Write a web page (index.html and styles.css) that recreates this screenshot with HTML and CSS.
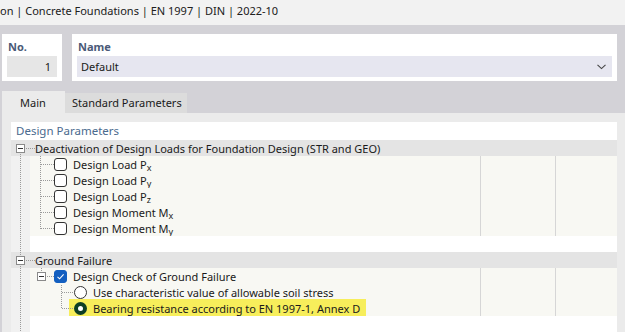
FILE: index.html
```html
<!DOCTYPE html>
<html>
<head>
<meta charset="utf-8">
<link rel="stylesheet" href="styles.css">
</head>
<body>
<div class="title">on | Concrete Foundations | EN 1997 | DIN | 2022-10</div>
<div class="header">
  <div class="card card-no">
    <div class="label">No.</div>
    <div class="field field-no">1</div>
  </div>
  <div class="card card-name">
    <div class="label">Name</div>
    <div class="field field-name">
      <span>Default</span>
      <svg class="chev" width="9" height="6" viewBox="0 0 9 6"><polyline points="0.5,0.8 4.5,4.6 8.5,0.8" fill="none" stroke="#444" stroke-width="1.1"/></svg>
    </div>
  </div>
</div>
<div class="tabs">
  <div class="tab active">Main</div>
  <div class="tab">Standard Parameters</div>
</div>
<div class="panel">
  <div class="tree">
    <div class="tree-head">Design Parameters</div>
    <div class="tree-body">
      <div class="row group"><span class="gtext">Deactivation of Design Loads for Foundation Design (STR and GEO)</span></div>
      <div class="row item">
        <div class="gutter"></div>
        <div class="cell name l2"><span class="cb"></span><span>Design Load P<sub>x</sub></span></div>
        <div class="cell c2"></div><div class="cell c3"></div>
      </div>
      <div class="row item">
        <div class="gutter"></div>
        <div class="cell name l2"><span class="cb"></span><span>Design Load P<sub>y</sub></span></div>
        <div class="cell c2"></div><div class="cell c3"></div>
      </div>
      <div class="row item">
        <div class="gutter"></div>
        <div class="cell name l2"><span class="cb"></span><span>Design Load P<sub>z</sub></span></div>
        <div class="cell c2"></div><div class="cell c3"></div>
      </div>
      <div class="row item">
        <div class="gutter"></div>
        <div class="cell name l2"><span class="cb"></span><span>Design Moment M<sub>x</sub></span></div>
        <div class="cell c2"></div><div class="cell c3"></div>
      </div>
      <div class="row item">
        <div class="gutter"></div>
        <div class="cell name l2"><span class="cb"></span><span>Design Moment M<sub>y</sub></span></div>
        <div class="cell c2"></div><div class="cell c3"></div>
      </div>
      <div class="row blank"><div class="gutter"></div><div class="cell"></div></div>
      <div class="row group"><span class="gtext">Ground Failure</span></div>
      <div class="row item">
        <div class="gutter"></div>
        <div class="cell name l2"><span class="cb checked"><svg width="13" height="13" viewBox="0 0 13 13"><polyline points="3.5,6.8 5.6,8.8 9.6,4.4" fill="none" stroke="#fff" stroke-width="1.1"/></svg></span><span>Design Check of Ground Failure</span></div>
        <div class="cell c2"></div><div class="cell c3"></div>
      </div>
      <div class="row item">
        <div class="gutter"></div>
        <div class="cell name l3"><span class="rb"></span><span>Use characteristic value of allowable soil stress</span></div>
        <div class="cell c2"></div><div class="cell c3"></div>
      </div>
      <div class="row item">
        <div class="gutter"></div>
        <div class="cell name l3"><span class="hl"><span class="rb on"></span><span>Bearing resistance according to EN 1997-1, Annex D</span></span></div>
        <div class="cell c2"></div><div class="cell c3"></div>
      </div>
      <div class="row blank tall"><div class="gutter"></div><div class="cell"></div></div>
      <svg class="lines" width="606" height="192" viewBox="0 0 606 192">
        <g fill="none" stroke="#9a9a9a" stroke-width="1" stroke-dasharray="1 1" shape-rendering="crispEdges">
          <line x1="15" y1="8.5" x2="24" y2="8.5"/>
          <line x1="9.5" y1="14" x2="9.5" y2="116"/>
          <line x1="9.5" y1="126" x2="9.5" y2="192"/>
          <line x1="15" y1="120.5" x2="24" y2="120.5"/>
          <line x1="29.5" y1="16" x2="29.5" y2="89"/>
          <line x1="30" y1="24.5" x2="43" y2="24.5"/>
          <line x1="30" y1="40.5" x2="43" y2="40.5"/>
          <line x1="30" y1="56.5" x2="43" y2="56.5"/>
          <line x1="30" y1="72.5" x2="43" y2="72.5"/>
          <line x1="30" y1="88.5" x2="43" y2="88.5"/>
          <line x1="30.5" y1="128" x2="30.5" y2="132"/>
          <line x1="36" y1="136.5" x2="43" y2="136.5"/>
          <line x1="50.5" y1="145" x2="50.5" y2="169"/>
          <line x1="51" y1="152.5" x2="63" y2="152.5"/>
          <line x1="51" y1="168.5" x2="63" y2="168.5"/>
        </g>
        <g shape-rendering="crispEdges">
          <rect x="5.5" y="4.5" width="8" height="8" fill="#fff" stroke="#8a8a8a"/>
          <line x1="7" y1="8.5" x2="12" y2="8.5" stroke="#333"/>
          <rect x="5.5" y="116.5" width="8" height="8" fill="#fff" stroke="#8a8a8a"/>
          <line x1="7" y1="120.5" x2="12" y2="120.5" stroke="#333"/>
          <rect x="26.5" y="132.5" width="8" height="8" fill="#fff" stroke="#8a8a8a"/>
          <line x1="28" y1="136.5" x2="33" y2="136.5" stroke="#333"/>
        </g>
      </svg>
    </div>
  </div>
</div>
</body>
</html>
```
FILE: styles.css
```css
* { box-sizing: border-box; }
html, body { margin: 0; padding: 0; }
body {
  width: 625px;
  height: 332px;
  overflow: hidden;
  background: #d3d2d7;
  font-family: "Noto Sans", "Open Sans", sans-serif;
  font-size: 11px;
  color: #1a1a1a;
}
.title {
  height: 25px;
  background: #f2f2f2;
  font-size: 11px;
  line-height: 21px;
  white-space: nowrap;
  color: #202020;
}
.header {
  display: flex;
  gap: 10px;
  padding: 9px 8px 0 2px;
  height: 66px;
}
.card {
  background: #fff;
  height: 47px;
  padding: 3px 5px 4px;
}
.card-no { width: 60px; }
.card-name { flex: 1; }
.label {
  height: 19px;
  line-height: 19px;
  padding-left: 1px;
  font-weight: bold;
  color: #4b5a78;
}
.field {
  height: 21px;
  line-height: 21px;
}
.field-no {
  background: #e6e6e6;
  text-align: right;
  padding-right: 6px;
}
.field-name {
  background: #e6e6f0;
  padding: 0 6px 0 4px;
  display: flex;
  align-items: center;
  justify-content: space-between;
}
.tabs {
  display: flex;
  align-items: flex-end;
  height: 22px;
  padding-left: 2px;
}
.tab {
  height: 20px;
  line-height: 20px;
  background: #dcdcdc;
  padding: 0 0 0 7px;
  width: 122px;
  white-space: nowrap;
  flex: none;
}
.tab.active {
  height: 22px;
  line-height: 24px;
  background: #ebebeb;
  width: 63px;
  padding: 0 0 0 18px;
}
.panel {
  margin-left: 2px;
  background: #ebebeb;
  height: 219px;
  padding: 9px 8px 0 9px;
}
.tree {
  background: #fff;
  height: 210px;
}
.tree-head {
  height: 18px;
  line-height: 18px;
  padding-left: 5px;
  color: #4a6a8e;
  font-size: 11.5px;
}
.tree-body {
  position: relative;
}
.row {
  height: 16px;
  display: flex;
  align-items: stretch;
  white-space: nowrap;
}
.row.tall { height: 18px; }
.group {
  background: #e4e4e4;
  align-items: center;
}
.gtext { padding-left: 24px; }
.gutter {
  width: 19px;
  flex: none;
  background: #f1f1f1;
}
.cell { display: flex; align-items: center; }
.blank .cell { flex: 1; background: #fff; }
.item .cell { background: #f8f8f3; }
.name { width: 450px; flex: none; }
.c2 { width: 75px; flex: none; border-left: 1px solid #d6d6d6; }
.c3 { flex: 1; border-left: 1px solid #d6d6d6; }
.l2 { padding-left: 24px; }
.l3 { padding-left: 44px; }
.cb {
  width: 13px;
  height: 13px;
  border: 1px solid #333;
  border-radius: 3px;
  background: #fff;
  margin-right: 6px;
  flex: none;
  display: flex;
}
.cb.checked {
  background: #135fc0;
  border-color: #135fc0;
}
.cb.checked svg { margin: -1px; }
.rb {
  width: 13px;
  height: 13px;
  border: 1.3px solid #333;
  border-radius: 50%;
  background: #fff;
  margin-right: 6px;
  flex: none;
}
.rb.on {
  border: 4px solid #0d3f24;
  background: #fff;
}
.hl {
  display: flex;
  align-items: center;
  height: 19px;
  background: #f7ee5b;
  margin-left: -5px;
  padding: 0 6px 0 5px;
}
sub {
  font-size: 9px;
  vertical-align: -2px;
  line-height: 0;
}
.lines {
  position: absolute;
  left: 0;
  top: 0;
  pointer-events: none;
}
```
